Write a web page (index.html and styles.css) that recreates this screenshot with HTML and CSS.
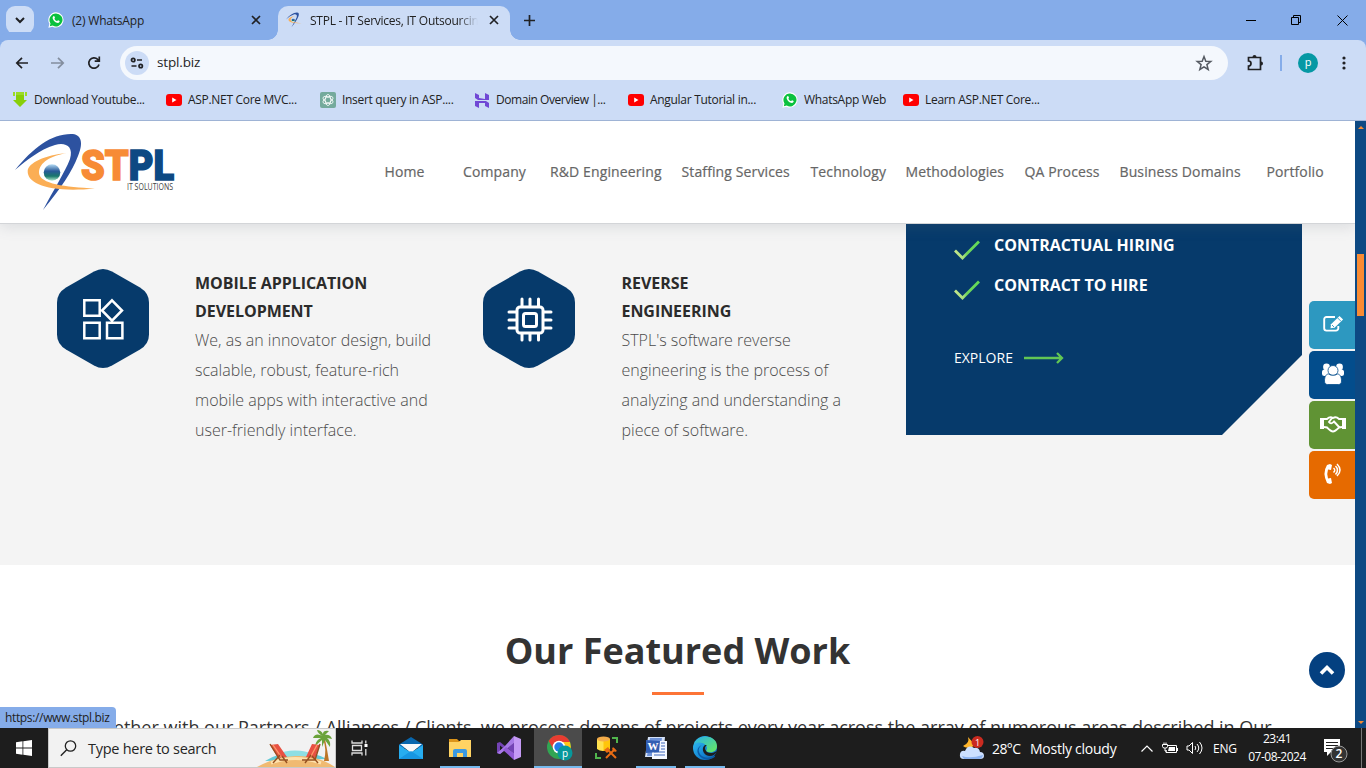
FILE: index.html
```html
<!DOCTYPE html>
<html lang="en">
<head>
<meta charset="utf-8">
<title>STPL - IT Services, IT Outsourcing</title>
<link rel="stylesheet" href="styles.css">
</head>
<body>
<svg class="defs" width="0" height="0">
  <defs>
    <symbol id="whatsapp" viewBox="0 0 16 16">
      <path d="M8 .3a7.6 7.6 0 0 0-6.6 11.4L.4 15.7l4.1-1A7.6 7.6 0 1 0 8 .3z" fill="#fff"/>
      <path d="M8 1.4a6.5 6.5 0 0 0-5.5 10l-.7 2.8 2.9-.7A6.5 6.5 0 1 0 8 1.4z" fill="#0ac13e"/>
      <path d="M5.4 4.2c.5-.4.9-.2 1.1.3l.5 1.2c0 .4-.6.8-.6 1.1.5 1.1 1.400 1.800 2.500 2.300.4 0 .8-.9 1.200-.8l1.500.8c.3.900-.7 1.800-1.600 1.800-2.600-.2-5.200-2.700-5.400-5.200 0-.6.400-1.200.800-1.500z" fill="#fff"/>
    </symbol>
    <symbol id="youtube" viewBox="0 0 16 12">
      <rect width="16" height="12" rx="3" fill="#f00"/><path d="M6.2 3.500v5l4.300-2.500z" fill="#fff"/>
    </symbol>
    <symbol id="swoosh" viewBox="0 0 82 78">
      <path d="M0 36C18 14 36 0 56 0C66 0 69 8 63 22C57 38 46 54 28 76C38 57 50 38 55 25C59 12 50 8 40 11C24 16 12 26 0 36z" fill="#2d52a0"/>
      <path d="M52 19C30 21 13 29 12.700 37C12 50 35 59 80 54.500C50 53 25 50 24 39C24 28 36 22 52 19z" fill="#fbae55"/>
      <circle cx="37" cy="38.500" r="8.300" fill="url(#globe)"/>
    </symbol>
    <linearGradient id="globe" x1="0" y1="0" x2="0" y2="1"><stop offset="0" stop-color="#b5dcf5"/><stop offset=".42" stop-color="#295a98"/><stop offset=".72" stop-color="#19786b"/><stop offset="1" stop-color="#b6edd0"/></linearGradient>
    <linearGradient id="tick" x1="0" y1="0" x2="1" y2="0"><stop offset="0" stop-color="#c3e78c"/><stop offset=".35" stop-color="#a8e07c"/><stop offset=".5" stop-color="#6fd75c"/><stop offset="1" stop-color="#62d957"/></linearGradient>
    <linearGradient id="edge" x1="0" y1="0" x2="1" y2="1"><stop offset="0" stop-color="#36c3f2"/><stop offset=".55" stop-color="#168bd8"/><stop offset="1" stop-color="#0d58a8"/></linearGradient>
    <linearGradient id="edgeGreen" x1="0" y1="0" x2="1" y2="1"><stop offset="0" stop-color="#27b2ed"/><stop offset="1" stop-color="#6bea59"/></linearGradient>
    <symbol id="check" viewBox="0 0 26 20"><path d="M1 10.500l7.500 7.500L25 1.500" fill="none" stroke="url(#tick)" stroke-width="2.800"/></symbol>
    <symbol id="hex" viewBox="0 0 92 99"><path d="M37 2.500q9-5 18 0l28 16q9 5.500 9 15v32q0 9.500-9 15L55 96.500q-9 5-18 0L9 80.500q-9-5.500-9-15v-32q0-9.500 9-15z" fill="#063a6b"/></symbol>
  </defs>
</svg>

<div class="window">
  <div class="tabstrip">
    <div class="tab-search"><svg width="10" height="6" viewBox="0 0 10 6"><path d="M1 1l4 4 4-4" class="ln bold"/></svg></div>
    <div class="tab idle">
      <svg width="16" height="16"><use href="#whatsapp"/></svg>
      <span class="tab-title">(2) WhatsApp</span>
      <svg class="x" width="10" height="10" viewBox="0 0 10 10"><path d="M1 1l8 8M9 1L1 9" class="ln"/></svg>
    </div>
    <div class="tab active">
      <svg width="16" height="16"><use href="#swoosh"/></svg>
      <span class="tab-title fade">STPL - IT Services, IT Outsourcing</span>
      <svg class="x" width="10" height="10" viewBox="0 0 10 10"><path d="M1 1l8 8M9 1L1 9" class="ln"/></svg>
    </div>
    <svg class="plus" width="11" height="11" viewBox="0 0 11 11"><path d="M5.500 0v11M0 5.500h11" class="ln"/></svg>
    <div class="win-buttons">
      <svg width="10" height="10"><path d="M0 5.500h10" class="hair"/></svg>
      <svg width="11" height="11"><path d="M.5 2.500h7v7h-7zM2.500 2.500v-2h7v7h-2" class="hair"/></svg>
      <svg width="11" height="11"><path d="M.5 .5l10 10M10.500 .5l-10 10" class="hair"/></svg>
    </div>
  </div>

  <div class="toolbar">
    <svg class="back" width="14" height="12" viewBox="0 0 14 12"><path d="M13 6H2M7 .8L1.800 6 7 11.200" class="ln"/></svg>
    <svg class="fwd" width="14" height="12" viewBox="0 0 14 12"><path d="M0 6h12M7 .8L12.200 6 7 11.200" class="ln"/></svg>
    <svg class="reload" width="14" height="14" viewBox="0 0 14 14"><path d="M12 8.500A5.200 5.200 0 1 1 10.700 3.300L12 4.500M12.300.5v4.700H7.700" class="ln"/></svg>
    <div class="omnibox">
      <span class="site-info"><svg width="14" height="12" viewBox="0 0 14 12"><g class="ln"><circle cx="3.200" cy="3" r="1.700"/><path d="M7 3h5M1.500 9h5"/><circle cx="10.700" cy="9" r="1.700"/></g></svg></span>
      <span class="url">stpl.biz</span>
      <svg class="star" width="16" height="16" viewBox="0 0 16 16"><path d="M8 1.500l1.800 4.700 5 .3-3.900 3.100 1.300 4.900L8 11.800l-4.200 2.700 1.300-4.900L1.200 6.500l5-.3z"/></svg>
    </div>
    <svg class="ext" width="18" height="18" viewBox="0 0 18 18"><path d="M2.500 3.500h12v12h-12v-3.500q2.500 0 2.500-2.500t-2.500-2.500z" class="ln"/><path d="M6.500 3a2 2 0 0 1 4 0zM15 7.500a2 2 0 0 1 0 4z" fill="#202124"/></svg>
    <span class="divider"></span>
    <span class="avatar">p</span>
    <svg class="dots" width="4" height="14"><g fill="#202124"><circle cx="2" cy="2" r="1.600"/><circle cx="2" cy="7" r="1.600"/><circle cx="2" cy="12" r="1.600"/></g></svg>
  </div>

  <div class="bookmarks">
    <span class="bm"><svg width="16" height="17" viewBox="0 0 16 17"><path d="M4 1h2v3h4V1h2v8h3l-7 7-7-7h3z" fill="#88cf08"/><path d="M1 1h2v4H1zM13 1h2v4h-2z" fill="#9bdc25"/><path d="M4 1h8v3H4z" fill="#9bdc25"/></svg>Download Youtube...</span>
    <span class="bm"><svg width="16" height="12"><use href="#youtube"/></svg>ASP.NET Core MVC...</span>
    <span class="bm"><svg width="16" height="16" viewBox="0 0 16 16"><rect width="16" height="16" rx="2" fill="#74aa9c"/><g fill="none" stroke="#fff" stroke-width=".8"><ellipse cx="8" cy="8" rx="2.800" ry="5.500"/><ellipse cx="8" cy="8" rx="2.800" ry="5.500" transform="rotate(60 8 8)"/><ellipse cx="8" cy="8" rx="2.800" ry="5.500" transform="rotate(120 8 8)"/></g></svg>Insert query in ASP....</span>
    <span class="bm tight"><svg width="14" height="16" viewBox="0 0 14 16"><path d="M0 1l4 2v3l6 1V1l4 2v5H3L0 6zM0 9h11l3 2v5l-4-2v-3H4v5l-4-2z" fill="#7048d5"/></svg>Domain Overview |...</span>
    <span class="bm"><svg width="16" height="12"><use href="#youtube"/></svg>Angular Tutorial in...</span>
    <span class="bm"><svg width="16" height="16"><use href="#whatsapp"/></svg>WhatsApp Web</span>
    <span class="bm"><svg width="16" height="12"><use href="#youtube"/></svg>Learn ASP.NET Core...</span>
  </div>

  <div class="viewport">
    <div class="page">
      <header class="site-header">
        <svg class="logo" width="160" height="78" viewBox="0 0 160 78">
          <use href="#swoosh" width="82" height="78"/>
          <text x="66" y="46" textLength="93" lengthAdjust="spacingAndGlyphs" class="logo-text"><tspan class="orange">ST</tspan><tspan class="navy">PL</tspan></text>
          <text x="112" y="56" textLength="46" lengthAdjust="spacingAndGlyphs" class="logo-sub">IT SOLUTIONS</text>
        </svg>
        <nav class="nav"><a>Home</a><a>Company</a><a>R&amp;D Engineering</a><a>Staffing Services</a><a>Technology</a><a>Methodologies</a><a>QA Process</a><a>Business Domains</a><a>Portfolio</a></nav>
      </header>

      <section class="services">
        <article class="feature first">
          <svg width="92" height="99"><use href="#hex"/><g fill="none" stroke="#fff" stroke-width="2.500"><path d="M27.300 31.300h15.400v15.400H27.300zM27.300 53.800h15.400v15.400H27.300zM50 53.800h15.400v15.400H50zM55 31.300l10 10.200-10 10.200-10-10.200z"/></g></svg>
          <div><h3>MOBILE APPLICATION<br>DEVELOPMENT</h3><p>We, as an innovator design, build<br>scalable, robust, feature-rich<br>mobile apps with interactive and<br>user-friendly interface.</p></div>
        </article>
        <article class="feature second">
          <svg width="92" height="99"><use href="#hex"/><g fill="none" stroke="#fff" stroke-width="3" stroke-linecap="round"><rect x="34" y="38" width="26" height="26" rx="3"/><rect x="40.500" y="44.500" width="13" height="13" rx="2"/><path d="M39 37v-7M47 37v-7M55.500 37v-7M39 65v6M47 65v6M55.500 65v6M33 43h-7M33 51h-7M33 59h-7M61 43h7M61 51h7M61 59h7"/></g></svg>
          <div><h3>REVERSE<br>ENGINEERING</h3><p>STPL's software reverse<br>engineering is the process of<br>analyzing and understanding a<br>piece of software.</p></div>
        </article>
        <aside class="hire">
          <ul>
            <li><svg width="26" height="20"><use href="#check"/></svg><span>CONTRACTUAL HIRING</span></li>
            <li><svg width="26" height="20"><use href="#check"/></svg><span>CONTRACT TO HIRE</span></li>
          </ul>
          <a class="explore">EXPLORE<svg width="40" height="12" viewBox="0 0 40 12"><path d="M0 6h38M33 1l5 5-5 5" fill="none" stroke="#62c654" stroke-width="2.300"/></svg></a>
        </aside>
      </section>

      <section class="work">
        <h2>Our Featured Work</h2>
        <span class="rule"></span>
        <p>Together with our Partners / Alliances / Clients, we process dozens of projects every year across the array of numerous areas described in Our</p>
      </section>

      <div class="quick">
        <a class="q1"><svg width="22" height="18" viewBox="0 0 22 18"><path d="M13 2H4.500a2.300 2.300 0 0 0-2.300 2.300v9a2.300 2.300 0 0 0 2.300 2.300h9.500a2.300 2.300 0 0 0 2.300-2.300V11" fill="none" stroke="#fff" stroke-width="1.900"/><path d="M8.500 13.300l.5-4L17.500 1l3.600 3.500-8.600 8.300z" fill="#fff"/><path d="M15.500 2.800l3.500 3.500M10 10l2 2" stroke="#2d98c0" stroke-width=".9"/></svg></a>
        <a class="q2"><svg width="24" height="22" viewBox="0 0 24 22"><g fill="#fff"><circle cx="5.500" cy="4" r="3.400"/><circle cx="18.500" cy="4" r="3.400"/><rect x="1" y="6.500" width="8" height="6.500" rx="2.500"/><rect x="15" y="6.500" width="8" height="6.500" rx="2.500"/><g stroke="#034d8c" stroke-width=".8"><circle cx="12" cy="7.500" r="5"/><path d="M3.500 18c0-5 2-7 4-7 2 1.700 7 1.700 9 0 2 0 4 2 4 7 0 2-1 3.500-3 3.500h-11c-2 0-3-1.500-3-3.500z"/></g></g></svg></a>
        <a class="q3"><svg width="26" height="18" viewBox="0 0 26 18"><g fill="none" stroke="#fff" stroke-width="1.900"><path d="M4 4h3q3-3 6-1 3-2 6 1h3M4 12l3 .5q4 4 6 4t6-4l3-.5M12 3L9 7q2 3 5-.5l5.500 6"/></g><path d="M0 3h4v11H0zM22 3h4v11h-4z" fill="#fff"/></svg></a>
        <a class="q4"><svg width="18" height="22" viewBox="0 0 18 22"><path d="M6 1L3 2Q-2 10 3 20l3 1 2-1-1-5-3 .4q-1.500-4.400 0-8.800l3 .4L8 2z" fill="#fff"/><g fill="none" stroke="#fff" stroke-width="1.500"><path d="M9.500 5q2.500 2 0 4.500M11.500 3q4 4 0 8.500M13 1q6 6 0 12"/></g></svg></a>
      </div>
      <a class="to-top"><svg width="16" height="12" viewBox="0 0 16 12"><path d="M2 9.500l6-6 6 6" fill="none" stroke="#fff" stroke-width="3.600"/></svg></a>
      <div class="status">https://www.stpl.biz</div>
    </div>
    <div class="scrollbar"><i class="up"></i><i class="thumb"></i><i class="down"></i></div>
  </div>

  <div class="taskbar">
    <span class="start"><svg width="16" height="16" viewBox="0 0 16 16"><path d="M0 2.200l6.500-.9v6.300H0zM7.300 1.200L16 0v7.600H7.300zM0 8.400h6.500v6.300L0 13.800zM7.300 8.400H16V16l-8.700-1.200z" fill="#fff"/></svg></span>
    <div class="search">
      <svg class="lens" width="17" height="17" viewBox="0 0 17 17"><circle cx="10.500" cy="6" r="5.200" fill="none" stroke="#222" stroke-width="1.300"/><path d="M6.700 9.700L.8 15.800" stroke="#222" stroke-width="1.400"/></svg>
      <span>Type here to search</span>
      <svg class="beach" width="78" height="38" viewBox="0 0 78 38">
        <path d="M8 32Q38 14 70 30z" fill="#61c9d5"/><ellipse cx="38" cy="25" rx="14" ry="3.500" fill="#8fdfe3"/>
        <path d="M0 38Q18 28 39 27t39 11z" fill="#f0ba72"/><path d="M14 34q24-9 50 0" fill="none" stroke="#ffe2ad" stroke-width="3"/>
        <path d="M66 10q4 10 1 22h5q-2-12-4-22z" fill="#bd7526"/>
        <path d="M66 7q-8-4-10 2l8 0q-5 2-6 8l7-6v7l3-7 5 7q1-6-3-9l5 1q-2-5-7-4l4-4q-6-1-6 3-2-4-6-4 1 4 6 6z" fill="#6aa33a"/>
        <path d="M13 16l8-1 9 13-9 1zM63 16l-8-1-6 13 9 1z" fill="#e85143"/><path d="M16 16l9 13M60 16l-7 13" stroke="#ff9a69" stroke-width="1.300"/>
        <path d="M13 15l10 16h8M16 34l7-8m7 8l-5-7M63 15l-5 16H45m3 3l6-8m7 8l-6-7" fill="none" stroke="#96501f" stroke-width="1.400"/>
      </svg>
    </div>
    <span class="app view"><svg width="18" height="16" viewBox="0 0 18 16"><g fill="none" stroke="#ddd" stroke-width="1.300"><path d="M1 .5V3h10V.5M1 15.500V13h10v2.500M1.500 5.500h9v5h-9zM14.800.5v3M14.800 9v6.500"/></g><path d="M13.500 4h3v3h-3z" fill="#fff"/></svg></span>
    <span class="app"><svg width="24" height="24" viewBox="0 0 24 24"><path d="M0 8.500L12 1l12 7.500V12H0z" fill="#0866ad"/><path d="M1 8h22l-11 9z" fill="#f6f8fa"/><path d="M0 9l12 7.500L24 9v14H0z" fill="#27adf0"/><path d="M0 23l12-8 12 8z" fill="#1796e2"/></svg></span>
    <span class="app open"><svg width="22" height="20" viewBox="0 0 22 20"><path d="M0 1h8l2 2h12v5H0z" fill="#dc9419"/><path d="M0 4h10l2-2h10v17H0z" fill="#ffd363"/><path d="M4 19v-6q0-2 2-2h10q2 0 2 2v6h-4v-4H8v4z" fill="#3c9ae2"/></svg></span>
    <span class="app"><svg width="24" height="24" viewBox="0 0 24 24"><path d="M0 7l3-1 15 12V6L3 18l-3-1z" fill="#7443b5"/><path d="M3 9.500v5l3-2.500z" fill="#1d1d1d"/><path d="M17 0l7 3v18l-7 3z" fill="#c59af5"/><path d="M17 0v7L3 18l-3-1 7-6z" fill="#a779e6"/><path d="M17 24v-7l-8-6-3 3z" fill="#935bd6"/></svg></span>
    <span class="app current"><svg width="26" height="26" viewBox="0 0 26 26"><circle cx="12" cy="12" r="12" fill="#31a553"/><path d="M1.600 6A12 12 0 0 1 23 7H12l-5 8z" fill="#e83c31"/><path d="M12 7h11q3 10-5 15z" fill="#ffc51a"/><circle cx="12" cy="12" r="6.300" fill="#fff"/><circle cx="12" cy="12" r="4.700" fill="#247dea"/><circle cx="18" cy="18" r="7.500" fill="#07989b"/><text x="18" y="21.500" text-anchor="middle" class="badge-p">p</text></svg></span>
    <span class="app"><svg width="24" height="24" viewBox="0 0 24 24"><path d="M2 3v10q5 4 13 0V3z" fill="#ffe14e"/><path d="M8.500 4v11q4 0 6.500-2V3z" fill="#ffc50b"/><ellipse cx="8.500" cy="3" rx="6.500" ry="2.500" fill="#f3ac4a"/><path d="M17 2h5v5M1 17v5h5" fill="none" stroke="#51b64d" stroke-width="2"/><path d="M12 13l9 9M20 13L11 22" stroke="#e96c14" stroke-width="2"/><path d="M9 14l4-3 2 3-3 3zM18 11l4 4-2 1-3-3z" fill="#e96c14"/></svg></span>
    <span class="app open word"><svg width="24" height="24" viewBox="0 0 24 24"><path d="M4 1h17l-2 20H1z" fill="#d5e2f9"/><path d="M6 2h12l-3 18H3z" fill="#6f93d8"/><path d="M8 5h15v18H8z" fill="#f5f8ff"/><path d="M10 16h11M10 19h11M17 7h4M17 10h4M17 13h4" stroke="#3f67ba"/><path d="M2 4l14 1-1 11-13 1z" fill="#315eb3"/><text x="3.500" y="14" class="word-w">W</text></svg></span>
    <span class="app open"><svg width="24" height="24" viewBox="0 0 24 24"><circle cx="12" cy="12" r="12" fill="url(#edge)"/><path d="M1 8C6-3 24-1 24 10c0 5-4 7-9 6-2-.5-2-1.500-1-3 1-4-6-9-13-5z" fill="url(#edgeGreen)"/><path d="M9 9c-8 5 0 17 12 11 2 0 1 1-1 2C9 28-2 14 9 9z" fill="#0c5ba7"/><path d="M14 9c-3 2-2 5 0 7 3 2 7 1 10-1-2 5-7 6-11 4-4-3-4-8-1-10z" fill="#1d1e1f"/></svg></span>
    <div class="tray">
      <svg class="weather" width="26" height="24" viewBox="0 0 26 24"><path d="M9 1q2 6-5 9 3 3 9 1l4-3q-3-1-8-7z" fill="#ffb52b"/><path d="M5 23q-5 0-4-5 1-4 5-3 3-7 9-3 5-1 6 4 4 0 4 4 0 3-4 3z" fill="#cde0ff"/><path d="M3 20q8 3 21-1-1 4-4 4H5z" fill="#8db3f0"/><circle cx="18.500" cy="6" r="6" fill="#ca2b20"/><text x="18.500" y="9.500" text-anchor="middle" class="alert">1</text></svg>
      <span class="temp">28°C</span><span class="cond">Mostly cloudy</span>
      <svg class="chev" width="12" height="7" viewBox="0 0 12 7"><path d="M.5 6.500L6 1l5.500 5.500" fill="none" stroke="#fff" stroke-width="1.200"/></svg>
      <svg class="batt" width="16" height="12" viewBox="0 0 16 12"><path d="M5 3.500h9.500v7H4V8M15.500 6v3" fill="none" stroke="#fff"/><path d="M7 5h6v4H6z" fill="#fff"/><path d="M.5 2.500h5v2q0 1.500-2 1.500h-1q-2 0-2-1.500zM2 .5v2M4 .5v2M3 6v3h2" stroke="#fff" fill="none"/></svg>
      <svg class="snd" width="18" height="14" viewBox="0 0 18 14"><path d="M1 5h2l3.500-3.500v11L3 9H1zM9 5q1.500 2 0 4M11 3q3.500 4 0 8M13.500 1q5 6 0 12" fill="none" stroke="#fff"/></svg>
      <span class="lang">ENG</span>
      <span class="clock"><b>23:41</b><b class="date">07-08-2024</b></span>
      <svg class="note" width="26" height="26" viewBox="0 0 26 26"><path d="M1 1h16v13H8l-4 4v-4H1z" fill="#fff"/><path d="M3 4.500h12M3 7.500h12M3 10.500h8" stroke="#202020"/><circle cx="16" cy="16" r="8" fill="#333" stroke="#999"/><text x="16" y="20.200" text-anchor="middle" class="count">2</text></svg>
      <span class="peek"></span>
    </div>
  </div>
</div>
</body>
</html>
```

FILE: styles.css
```css
* { box-sizing: border-box; }
body { margin: 0; overflow: hidden; font-family: "Open Sans", "Noto Sans", sans-serif; color: #333; }
svg { display: block; flex: none; overflow: visible; }
.defs { position: absolute; }
h2, h3, p, ul { margin: 0; padding: 0; }
.window { width: 1366px; height: 768px; display: flex; flex-direction: column; overflow: hidden; }
.ln { fill: none; stroke: #202124; stroke-width: 1.7; }
.bold { stroke-width: 2; }
.hair { fill: none; stroke: #000; stroke-width: 1; }

.tabstrip { height: 40px; flex: none; background: #85ace9; display: flex; align-items: center; padding-left: 6px; }
.tab-search { width: 28px; height: 28px; border-radius: 9px; background: #ccdcf6; display: flex; align-items: center; justify-content: center; }
.tab { display: flex; align-items: center; font-size: 12px; color: #222; height: 34px; }
.idle { width: 244px; padding-left: 14px; }
.active { width: 232px; margin-top: 6px; padding: 0 11px 6px 8px; background: #ccdcf6; border-radius: 10px 10px 0 0; position: relative; }
.active::before, .active::after { content: ""; position: absolute; bottom: 0; width: 10px; height: 10px; }
.active::before { left: -10px; background: radial-gradient(circle at 0 0, transparent 9.5px, #ccdcf6 10px); }
.active::after { right: -10px; background: radial-gradient(circle at 100% 0, transparent 9.5px, #ccdcf6 10px); }
.tab-title { margin-left: 8px; letter-spacing: -.2px; white-space: nowrap; }
.x { margin-left: auto; }
.idle .x { margin-right: 17px; }
.fade { width: 168px; overflow: hidden; letter-spacing: -.25px; -webkit-mask-image: linear-gradient(90deg, #000 148px, transparent 168px); }
.plus { margin-left: 14px; }
.win-buttons { margin-left: auto; display: flex; gap: 35px; align-items: center; padding-right: 18px; }

.toolbar { height: 46px; flex: none; display: flex; align-items: center; background: #ccdcf6; padding-left: 15px; border-radius: 8px 8px 0 0; box-shadow: 0 -8px 0 0 #85ace9; }
.fwd { margin-left: 22px; opacity: .42; }
.reload { margin-left: 22px; }
.omnibox { margin-left: 19px; width: 1108px; height: 34px; border-radius: 17px; background: #f4f8fd; display: flex; align-items: center; padding: 0 16px 0 5px; }
.site-info { width: 24px; height: 24px; border-radius: 50%; background: #ccdcf6; display: flex; align-items: center; justify-content: center; }
.url { margin: -2px 0 0 8px; font-size: 13.5px; letter-spacing: -.15px; color: #1f1f1f; }
.star { margin-left: auto; fill: none; stroke: #555a62; stroke-width: 1.5; }
.ext { margin-left: 18px; }
.divider { width: 2px; height: 16px; background: #85ace9; margin-left: 16px; }
.avatar { width: 20px; height: 20px; border-radius: 50%; background: #0598a4; color: #fff; font-size: 11px; line-height: 18px; text-align: center; margin-left: 16px; }
.dots { margin-left: 24px; }

.bookmarks { height: 35px; flex: none; background: #ccdcf6; border-bottom: 1px solid #9eb3d5; display: grid; grid-template-columns: 154px 154px 155px 153px 154px 121px 150px; padding: 0 0 7px 12px; align-items: center; }
.bm { display: flex; align-items: center; gap: 6px; font-size: 12px; letter-spacing: -.3px; color: #222; white-space: nowrap; }
.tight { letter-spacing: -.45px; gap: 7px; }

.viewport { height: 607px; flex: none; display: flex; }
.page { width: 1355px; height: 607px; overflow: hidden; position: relative; background: #fff; }
.site-header { height: 103px; border-bottom: 1px solid #d3d5d8; background: #fff; box-shadow: 0 2px 14px rgba(100,110,125,.2); position: relative; z-index: 2; display: flex; padding-left: 15px; }
.logo { margin-top: 13px; }
.logo-text { font-family: Roboto, sans-serif; font-weight: 900; font-size: 43px; stroke-width: 1.6px; }
.orange { fill: #f78b35; stroke: #f78b35; }
.navy { fill: #0d4983; stroke: #0d4983; }
.logo-sub { font-size: 9px; fill: #444; }
.nav { margin: -2px 0 0 209.5px; display: grid; grid-template-columns: 78.5px 87px 131.500px 129px 95px 119px 95px 147px 90px; align-items: center; font-size: 14px; font-weight: 500; letter-spacing: .12px; color: #666; -webkit-text-stroke: .2px #666; white-space: nowrap; }

.services { height: 341px; background: #f4f4f4; display: flex; padding-left: 57px; }
.feature { display: flex; gap: 46px; width: 426px; padding-top: 45px; }
.second { width: 423px; gap: 46.500px; }
.feature h3 { font-size: 16px; line-height: 28px; font-weight: 700; color: #2b2b2b; letter-spacing: -.05px; white-space: nowrap; }
.feature p { font-size: 16px; line-height: 30px; font-weight: 300; color: #4b4b4b; white-space: nowrap; }
.hire { width: 396px; height: 211px; background: #063a6b; clip-path: polygon(0 0, 100% 0, 100% 131px, 316px 100%, 0 100%); padding: 1px 48px; color: #fff; }
.hire li { height: 40px; display: flex; gap: 14px; font-size: 16px; line-height: 40px; font-weight: 700; white-space: nowrap; }
.hire li svg { margin-top: 15px; }
.explore { display: flex; align-items: center; gap: 11px; font-size: 14px; line-height: 20px; margin-top: 43px; }

.work { display: flex; flex-direction: column; align-items: center; padding-top: 60px; }
.work h2 { font-size: 36px; line-height: 52px; font-weight: 700; }
.rule { width: 52px; height: 3px; background: #fd7436; margin-top: 15px; }
.work p { font-size: 18px; line-height: 30px; margin-top: 17px; white-space: nowrap; }

.quick { position: absolute; right: 0; top: 180px; width: 46px; display: flex; flex-direction: column; gap: 2px; z-index: 3; }
.quick a { height: 48px; border-radius: 5px 0 0 5px; display: flex; align-items: center; justify-content: center; }
.quick svg { margin: -2px 0 0 2px; }
.q1 { background: #2d98c0; } .q2 { background: #034d8c; } .q3 { background: #609334; } .q4 { background: #e66a00; }
.to-top { position: absolute; left: 1309px; top: 531px; width: 36px; height: 36px; background: #044080; border-radius: 50%; display: flex; align-items: center; justify-content: center; }
.status { position: absolute; left: 0; bottom: 0; width: 116px; height: 21px; background: #85ace9; border-radius: 0 4px 0 0; font-size: 12px; line-height: 21px; padding-left: 5px; letter-spacing: -.35px; color: #222; }
.scrollbar { width: 11px; background: #0d4983; display: flex; flex-direction: column; align-items: center; padding: 5px 0 4px; }
.scrollbar i { border: 3px solid transparent; }
.scrollbar .up { border-top: 0; border-bottom: 3px solid #f58a32; }
.scrollbar .down { border-bottom: 0; border-top: 3px solid #f58a32; margin-top: auto; }
.scrollbar .thumb { border: 0; width: 7px; height: 62px; background: #f98b33; margin-top: 125px; }

.taskbar { height: 40px; flex: none; background: #1d1d1d; display: flex; color: #fff; }
.start { width: 48px; display: flex; align-items: center; justify-content: center; }
.search { width: 288px; background: #f2f2f2; border: 1px solid #c9c9c9; display: flex; align-items: center; padding-left: 11px; color: #262626; font-size: 14.500px; letter-spacing: -.27px; white-space: nowrap; }
.search span { margin-left: 11px; }
.beach { margin-left: auto; overflow: hidden; }
.app { width: 48px; height: 40px; margin-right: 1px; display: flex; align-items: center; justify-content: center; border-bottom: 2px solid transparent; padding-top: 2px; }
.view { margin-right: 3px; }
.open { background: linear-gradient(#76b9ed, #76b9ed) 4px 100% / 40px 2px no-repeat; background-origin: border-box; background-clip: border-box; }
.current { background: #4b4b4b; border-bottom-color: #76b9ed; }
.current svg { margin-left: 3px; }
.badge-p { font-size: 10px; fill: #fff; }
.word-w { font: 700 11px "Liberation Serif", serif; fill: #fff; }
.tray { margin-left: auto; width: 407px; display: flex; align-items: center; font-size: 14px; white-space: nowrap; }
.temp { margin-left: 7px; width: 38px; letter-spacing: -.6px; }
.cond { width: 87px; letter-spacing: -.25px; }
.chev { margin-left: 24px; }
.batt { margin-left: 9px; }
.snd { margin-left: 8px; }
.lang { font-size: 12px; margin-left: 9px; width: 24px; letter-spacing: -.2px; }
.clock { width: 60px; margin-left: 10px; display: flex; flex-direction: column; align-items: center; font-size: 12px; line-height: 18px; }
.clock b { font-weight: 400; letter-spacing: -.5px; }
.note { margin-left: 16px; margin-top: 6px; }
.alert { font-size: 9px; fill: #fff; }
.count { font-size: 12px; font-weight: 600; fill: #fff; }
.peek { width: 1px; height: 40px; background: #777; margin-left: auto; margin-right: 4px; }
```
